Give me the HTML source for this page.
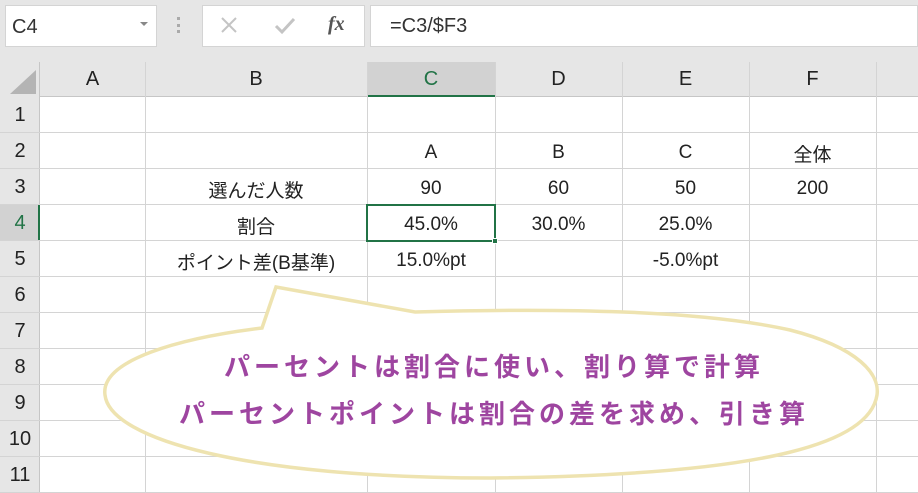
<!DOCTYPE html>
<html><head><meta charset="utf-8"><style>
*{margin:0;padding:0;box-sizing:border-box}
body{width:918px;height:493px;overflow:hidden;background:#fff;font-family:"Liberation Sans","Noto Sans CJK JP",sans-serif;position:relative;color:#222}
.a{position:absolute}
.c{position:absolute;display:flex;align-items:center;justify-content:center;font-size:19px}
.h{background:#e6e6e6;color:#222}
</style></head><body>
<div class="a" style="left:0;top:0;width:918px;height:62px;background:#e6e6e6"></div>
<div class="a" style="left:5px;top:5px;width:152px;height:42px;background:#fff;border:1px solid #d4d4d4"></div>
<div class="a" style="left:12px;top:16px;font-size:20px;color:#333">C4</div>
<div class="a" style="left:140px;top:22px;border-left:4px solid transparent;border-right:4px solid transparent;border-top:4px solid #888"></div>
<div class="a" style="left:177px;top:17px;width:3px;height:16px;border-left:3px dotted #aaa"></div>
<div class="a" style="left:202px;top:5px;width:163px;height:42px;background:#fff;border:1px solid #d4d4d4"></div>
<svg class="a" style="left:220px;top:16px" width="90" height="20"><path d="M2,2 L16,16 M16,2 L2,16" stroke="#c4c4c4" stroke-width="2"/><path d="M56,10 L62,16 L74,3" stroke="#c4c4c4" stroke-width="3" fill="none"/></svg>
<div class="a" style="left:328px;top:13px;font-size:20px;color:#555;font-family:'Liberation Serif',serif;font-style:italic;font-weight:bold">fx</div>
<div class="a" style="left:370px;top:5px;width:548px;height:42px;background:#fff;border:1px solid #d4d4d4"></div>
<div class="a" style="left:390px;top:15px;font-size:20px;color:#333">=C3/$F3</div>
<div class="a h" style="left:0;top:62px;width:918px;height:35px;border-bottom:1px solid #c6c6c6"></div>
<div class="a h" style="left:0;top:62px;width:40px;height:431px;border-right:1px solid #c6c6c6"></div>
<svg class="a" style="left:8px;top:68px" width="30" height="27"><polygon points="28,2 28,26 2,26" fill="#b4b4b4"/></svg>
<div class="a" style="left:367px;top:62px;width:128px;height:35px;background:#d2d2d2;border-bottom:2px solid #217346"></div>
<div class="a" style="left:0;top:205px;width:40px;height:36px;background:#d2d2d2;border-right:2px solid #217346"></div>
<div id="g"></div>
<svg class="a" style="left:0;top:0" width="918" height="493">
<path d="M262,328 L276,287 L415,312 C560,308 700,310 790,330 C860,348 880,375 877,395 C870,440 780,475 490,478 C250,478 110,440 105,395 C100,360 180,338 262,328 Z" fill="#fff" stroke="#eee3b0" stroke-width="3.5"/>
<text x="494" y="376" text-anchor="middle" font-size="26" font-weight="bold" fill="#9e45a0" font-family="Liberation Sans,Noto Sans CJK JP,sans-serif" letter-spacing="4">パーセントは割合に使い、割り算で計算</text>
<text x="494" y="423" text-anchor="middle" font-size="26" font-weight="bold" fill="#9e45a0" font-family="Liberation Sans,Noto Sans CJK JP,sans-serif" letter-spacing="4">パーセントポイントは割合の差を求め、引き算</text>
</svg>
<script>
var cols=[40,145,367,495,622,749,876,918],names="ABCDEF",h='';
for(var i=0;i<6;i++){h+='<div class="c" style="left:'+cols[i]+'px;top:62px;width:'+(cols[i+1]-cols[i])+'px;height:35px;font-size:20px;'+(i==2?'color:#217346':'')+'">'+names[i]+'</div>';}
for(var i=1;i<7;i++)h+='<div class="a" style="left:'+cols[i]+'px;top:62px;width:1px;height:431px;background:#d4d4d4"></div>';
for(var r=1;r<=11;r++){var y=97+(r-1)*36;h+='<div class="a" style="left:0;top:'+(y+35)+'px;width:918px;height:1px;background:#d4d4d4"></div>';h+='<div class="c" style="left:0;top:'+y+'px;width:40px;height:36px;font-size:20px;'+(r==4?'color:#217346':'')+'">'+r+'</div>';}
function cell(c,r,t){var y=97+(r-1)*36+2;h+='<div class="c" style="left:'+cols[c]+'px;top:'+y+'px;width:'+(cols[c+1]-cols[c])+'px;height:36px">'+t+'</div>';}
cell(2,2,'A');cell(3,2,'B');cell(4,2,'C');cell(5,2,'全体');
cell(1,3,'選んだ人数');cell(2,3,'90');cell(3,3,'60');cell(4,3,'50');cell(5,3,'200');
cell(1,4,'割合');cell(2,4,'45.0%');cell(3,4,'30.0%');cell(4,4,'25.0%');
cell(1,5,'ポイント差(B基準)');cell(2,5,'15.0%pt');cell(4,5,'-5.0%pt');
h+='<div class="a" style="left:366px;top:204px;width:130px;height:38px;border:2px solid #217346"></div><div class="a" style="left:492px;top:238px;width:6px;height:6px;background:#217346;border:1px solid #fff"></div>';
document.getElementById('g').innerHTML=h;
</script>
</body></html>
